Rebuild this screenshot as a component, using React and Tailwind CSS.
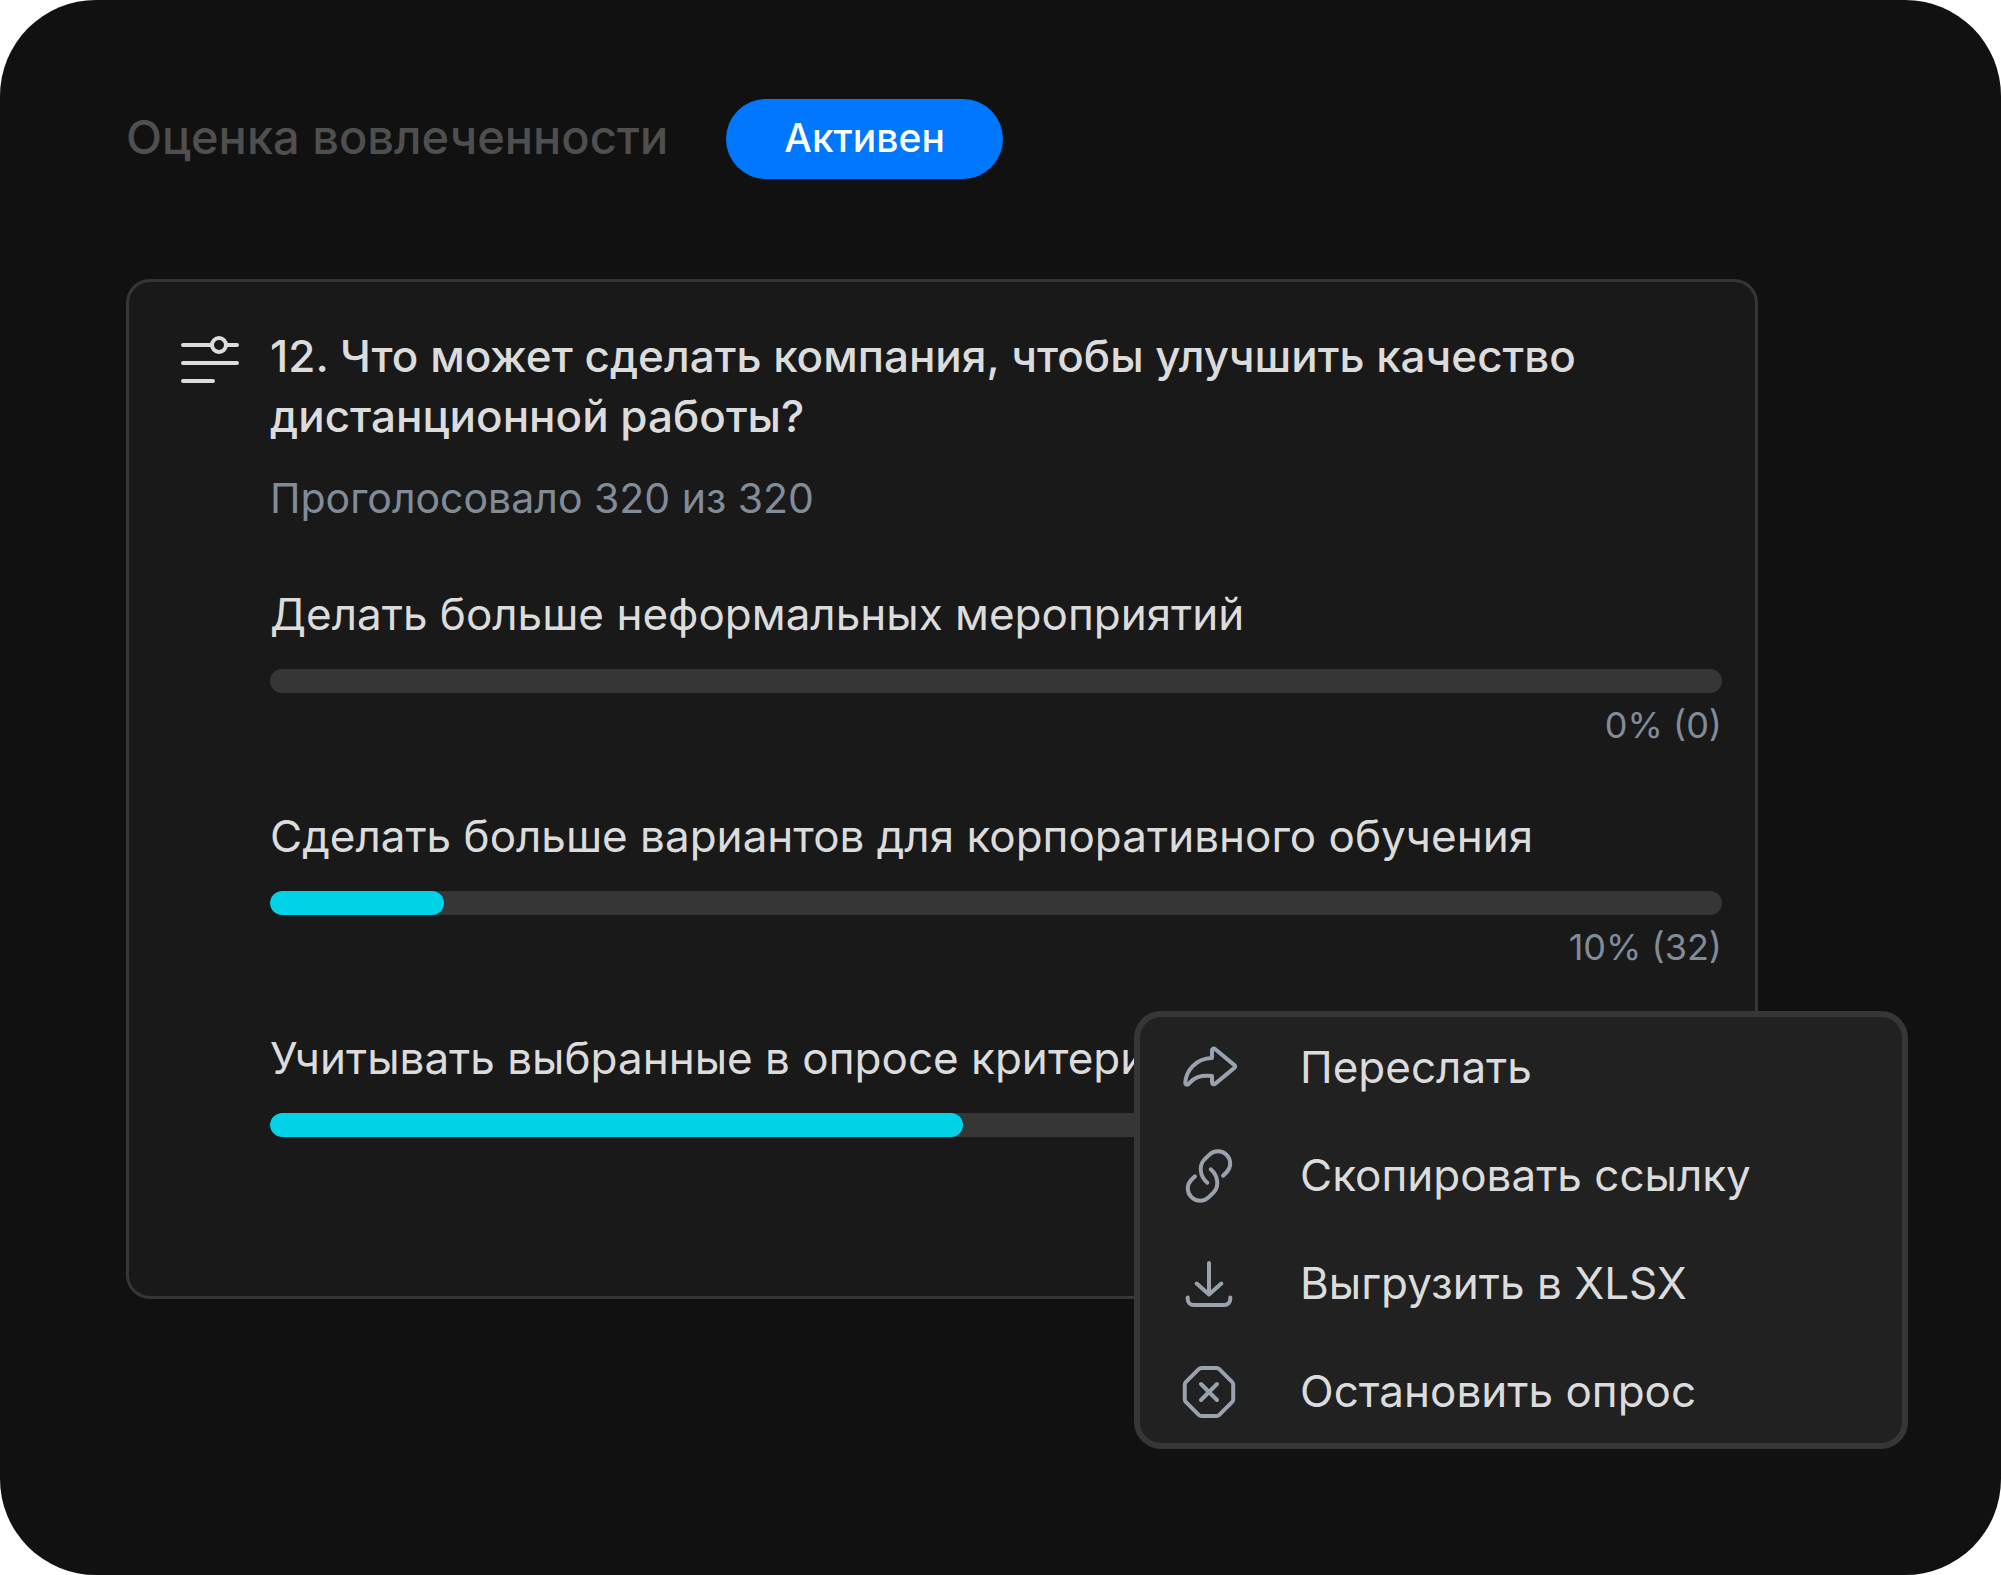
import React from 'react';

const options = [
  { label: 'Делать больше неформальных мероприятий', fill: 0, result: '0% (0)' },
  { label: 'Сделать больше вариантов для корпоративного обучения', fill: 12, result: '10% (32)' },
  { label: 'Учитывать выбранные в опросе критерии', fill: 47.7 },
];

const Icon = ({ children, className = '' }) => (
  <svg
    viewBox="0 0 60 60"
    fill="none"
    stroke="currentColor"
    strokeWidth="4"
    strokeLinecap="round"
    strokeLinejoin="round"
    aria-hidden="true"
    className={`size-[60px] shrink-0 ${className}`}
  >
    {children}
  </svg>
);

const PollIcon = () => (
  <Icon className="mt-1 text-[#dcdcdc]">
    <path d="M3 15h29M46 15h11M3 33h54M3 51h30" />
    <circle cx="39" cy="15" r="7" />
  </Icon>
);

const ShareIcon = () => (
  <Icon>
    <path d="M33 21V13.500c0-2 2-2.400 3.300-1.300L55.400 28.100c1 .8 1 2 0 2.800L36.300 46.600c-1.300 1.100-3.300.7-3.300-1.300V39C21 38 15 40.500 9.800 46.800c-1.100 1.400-3.600 1.200-3.500-1.100C6.900 34.500 16 21.500 33 21Z" />
  </Icon>
);

const LinkIcon = () => (
  <Icon>
    <path d="M44 30.7 47.6 27.2A12.3 12.3 0 0 0 30.200 9.800L25.400 14.500C19.800 20.500 20.500 31 28.300 37.700" />
    <path d="M16 31.300 12.400 34.800A12.300 12.300 0 0 0 29.800 52.200L34.600 47.500C40.200 41.500 39.500 31 31.700 24.300" />
  </Icon>
);

const DownloadIcon = () => (
  <Icon>
    <path d="M30 10v31M17.700 30.500 30 41.500l12.300-11" />
    <path d="M8.700 44.500v1.500a6 6 0 0 0 6 6h30.600a6 6 0 0 0 6-6v-1.500" />
  </Icon>
);

const StopIcon = () => (
  <Icon>
    <path d="M22.500 7h15a4 4 0 0 1 2.800 1.200L53 20.900a4 4 0 0 1 1.200 2.800v14.600a4 4 0 0 1-1.200 2.800L40.300 53.800a4 4 0 0 1-2.800 1.200h-15a4 4 0 0 1-2.800-1.200L7 41.100a4 4 0 0 1-1.200-2.800V23.700A4 4 0 0 1 7 20.900L19.700 8.200A4 4 0 0 1 22.500 7Z" />
    <path d="m22 23 16 16M38 23 22 39" />
  </Icon>
);

const actions = [
  { label: 'Переслать', icon: ShareIcon },
  { label: 'Скопировать ссылку', icon: LinkIcon },
  { label: 'Выгрузить в XLSX', icon: DownloadIcon },
  { label: 'Остановить опрос', icon: StopIcon },
];

const PollOption = ({ label, fill, result }) => (
  <li>
    <p className="text-[44px] leading-[52px] whitespace-nowrap">{label}</p>
    <div
      role="progressbar"
      aria-label={label}
      aria-valuenow={fill}
      className="mt-[29px] h-6 rounded-full bg-[#363636] overflow-hidden"
    >
      <div className="h-full rounded-full bg-[#00d3e6]" style={{ width: `${fill}%` }} />
    </div>
    {result && (
      <p className="mt-[10px] text-right text-[36px] leading-[44px] text-[#818c99]">{result}</p>
    )}
  </li>
);

const ActionMenu = () => (
  <div
    role="menu"
    className="absolute -right-[153px] -bottom-[153px] w-[774px] flex flex-col gap-6 pt-2 pb-[10px] bg-[#212121] border-6 border-[#363636] rounded-[27px]"
  >
    {actions.map(({ label, icon: ActionIcon }) => (
      <button
        key={label}
        type="button"
        role="menuitem"
        className="flex items-center h-[84px] pl-[39px] gap-[61px] text-left text-[44px] leading-[52px] text-[#dcdcdc]"
      >
        <span className="text-[#99a2ad]">
          <ActionIcon />
        </span>
        {label}
      </button>
    ))}
  </div>
);

const App = () => {
  return (
    <div className="bg-white">
      <main className="min-h-screen bg-[#111111] rounded-[96px] pt-[99px] pb-[276px] pl-[126px] pr-[243px] font-['Inter','Noto_Sans',sans-serif]">
        <header className="flex items-center gap-[58px]">
          <h1 className="pb-1 text-[47px] leading-[60px] font-medium text-[#4f4f4f]">Оценка вовлеченности</h1>
          <span className="flex items-center h-20 px-[58px] pb-[2px] rounded-full bg-[#0077ff] text-[39px] leading-[48px] font-medium text-white">
            Активен
          </span>
        </header>

        <section className="relative mt-[100px] flex gap-[30px] pt-11 pb-[159px] pl-[51px] pr-[33px] bg-[#191919] border-3 border-[#363636] rounded-3xl text-[#dcdcdc]">
          <PollIcon />
          <div className="flex-1 min-w-0">
            <h2 className="text-[44px] leading-[60px] font-medium">
              12. Что может сделать компания, чтобы улучшить качество дистанционной работы?
            </h2>
            <p className="mt-7 text-[41px] leading-[48px] text-[#818c99]">Проголосовало 320 из 320</p>
            <ul className="mt-[66px] flex flex-col gap-[63px]">
              {options.map((option) => (
                <PollOption key={option.label} {...option} />
              ))}
            </ul>
          </div>
          <ActionMenu />
        </section>
      </main>
    </div>
  );
};

export default App;
